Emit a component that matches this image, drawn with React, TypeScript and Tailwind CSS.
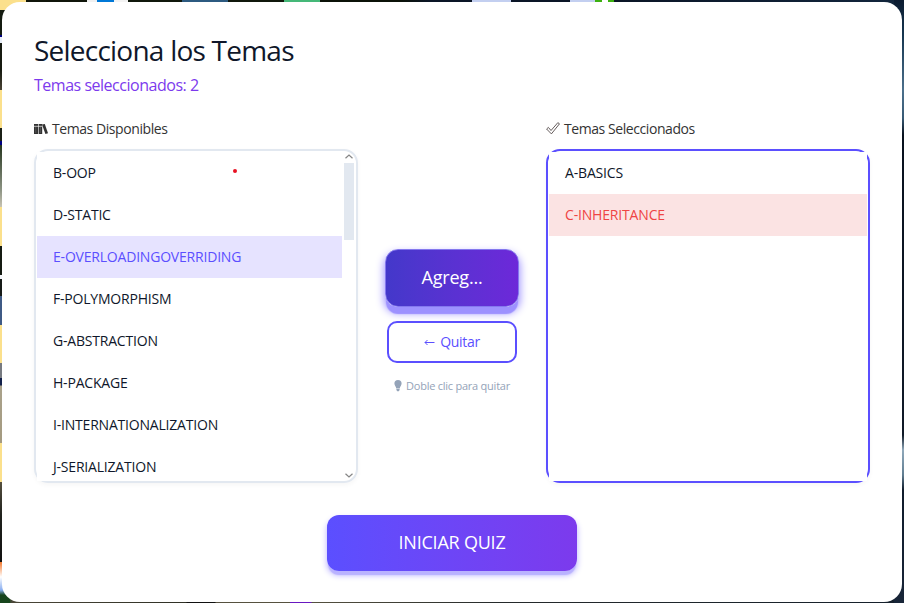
import React from "react";

const available = [
  "B-OOP",
  "D-STATIC",
  "E-OVERLOADINGOVERRIDING",
  "F-POLYMORPHISM",
  "G-ABSTRACTION",
  "H-PACKAGE",
  "I-INTERNATIONALIZATION",
  "J-SERIALIZATION",
];
const chosen = ["A-BASICS", "C-INHERITANCE"];

function Books() {
  return (
    <svg width="14" height="10" viewBox="0 0 14 10" className="shrink-0">
      <path d="M0 0h4v10H0zM4.6 0h3.6v10H4.6z" fill="#333" />
      <path d="M8 .6 10.8 0 14 9.2 11.4 10z" fill="#333" />
      <path d="M0 2.3h8.2" stroke="#fff" strokeWidth=".7" />
      <path d="M1.8 3v6M6.4 3v6" stroke="#777" strokeWidth=".5" />
    </svg>
  );
}

function Check() {
  return (
    <svg width="14" height="13" viewBox="0 0 14 13" className="shrink-0">
      <path d="M.6 7 2.4 5.4 5 8.5 11.8.7 13.5 1.8 5.4 11.9z" fill="#fff" stroke="#4a4040" strokeWidth=".85" />
    </svg>
  );
}

function Bulb() {
  return (
    <svg width="8" height="12" viewBox="0 0 8 12" className="shrink-0">
      <path d="M4 0a3.6 3.6 0 0 1 3.6 3.6C7.6 5.6 6 6.4 5.8 8.4H2.2C2 6.4.4 5.6.4 3.6A3.6 3.6 0 0 1 4 0zM2.4 9h3.2v1L4.8 11.3H3.2L2.4 10z" fill="#94a3b8" />
    </svg>
  );
}

function Arrow() {
  return (
    <svg width="11" height="7" viewBox="0 0 11 7" className="mt-0.5 shrink-0">
      <path d="M10.5 3.5H1M3.5 1 1 3.5 3.5 6" fill="none" stroke="currentColor" />
    </svg>
  );
}

function Chevron({ down = false }: { down?: boolean }) {
  return (
    <svg width="8" height="5" viewBox="0 0 8 5" className={down ? "rotate-180" : ""}>
      <path d="M.5 4.3 4 1l3.5 3.3" fill="none" stroke="#858585" strokeWidth="1.2" />
    </svg>
  );
}

export default function App() {
  return (
    <div className="flex h-[603px] w-[904px] overflow-hidden bg-[linear-gradient(90deg,#fbe08c_26px,#10150a_26px_87px,#f0f0f0_87px_97px,#0078d7_97px_114px,#f3f3f3_114px_128px,#10180c_128px_182px,#2c5a80_182px_228px,#10180c_228px_284px,#45b878_284px_320px,#0b1208_320px_400px,#0a1526_430px_472px,#c3cff0_472px_511px,#0a1526_511px_570px,#c3cff0_570px_595px,#3cb010_595px_602px,#fff_602px_608px,#3cb010_608px_614px,#0a1526_614px,#12263d)] bg-size-[904px_10px] bg-no-repeat">
      <div className="h-full w-full bg-[linear-gradient(180deg,transparent_10px,#141b10_10px_35px,#000080_35px_37px,#e8eef8_37px_43px,#161a10_43px_70px,#4a4435_90px,#fbe08c_90px_128px,#1b2016_128px_141px,#000080_141px_145px,#26361f_145px,#8d9484_190px,#c8c4b4_207px,#fbe08c_207px_246px,#151b12_246px_275px,#f4f6fb_275px_279px,#161b18_279px_296px,#3f5a85_296px_325px,#fbe08c_325px_363px,#777a80_363px_378px,#12204a_378px_385px,#aaa28b_386px,#a49a80_443px,#fbe08c_443px_482px,#56503f_482px,#20221d_515px,#111_562px,#f47a30_562px,#fff_577px,#89aef0_590px,#17451d_595px),linear-gradient(180deg,#0b1b30,#163650_35px,#4c708c_90px,#385a75_118px,#08111e_135px,#101a28_435px,#90a9bb_450px,#607d91_475px,#101c2c_490px,#182538),linear-gradient(90deg,#164b20_8px,#4a4638_12px,#303126_186px,#111_187px_215px,#56513f_216px_290px,#6818c0_290px_311px,#55513f_312px,#252a2b_500px,#15202c)] bg-size-[10px_603px,10px_603px,904px_10px] bg-position-[left_top,right_top,left_bottom] bg-no-repeat p-0.5 pb-px font-['Open_Sans','Noto_Sans',sans-serif]">
        <main className="flex h-[600px] w-[900px] flex-col rounded-[18px] bg-white px-8 pt-8">
          <h1 className="h-9 whitespace-nowrap text-[28px] leading-8 tracking-[-0.77px] text-[#0f172a]">Selecciona los Temas</h1>
          <p className="h-[31px] whitespace-nowrap text-[16px] leading-[31px] tracking-[-0.48px] text-[#7c3aed]">Temas seleccionados: 2</p>

          <div className="mt-3.5 flex">
            <section className="w-[324px]">
              <h2 className="flex h-7 items-center gap-1 whitespace-nowrap pb-0.5 text-[14px] tracking-[-0.43px] text-[#333]"><span className="pt-px"><Books /></span>Temas Disponibles</h2>
              <div className="mt-1.5 h-[334px] rounded-[14px] border-2 border-[#e2e8f0] pt-px shadow-[0_2px_5px_rgba(0,0,0,0.04)]">
                <div className="flex h-full">
                  <ul className="relative ml-px w-[305px] overflow-hidden bg-white text-[14px] tracking-[-0.2px] text-[#0f172a]">
                    {available.map((t, i) => (
                      <li key={t} className={i === 2 ? "flex h-[42px] items-center bg-[#e6e3ff] pb-0.5 pl-4 text-[#5b4fff]" : "flex h-[42px] items-center pb-0.5 pl-4"}>{t}</li>
                    ))}
                    <span className="absolute left-[196px] top-[17px] size-1 rounded-full bg-[#e81123]" />
                  </ul>
                  <div className="ml-0.5 flex w-2.5 flex-col items-center pt-0.5">
                    <Chevron />
                    <div className="mt-1 h-[77px] w-2.5 bg-[#e2e8f0]" />
                    <div className="mt-auto flex pb-[3px]"><Chevron down /></div>
                  </div>
                </div>
              </div>
            </section>

            <section className="flex w-[188px] flex-col items-center pt-[134px]">
              <button className="h-[58px] w-[134px] rounded-[13px] border border-[#8478ee] bg-linear-to-r from-[#4338ca] to-[#6d28d9] bg-origin-border pb-0.5 text-[18px] tracking-[-0.2px] text-white shadow-[0_8px_1px_-1px_#9d91ff,0_5px_9px_1px_#9d91ff]">Agreg...</button>
              <button className="mt-3.5 flex h-[42px] w-[130px] items-center justify-center gap-[5px] rounded-[10px] border-2 border-[#5b4fff] bg-white pb-0.5 text-[14px] tracking-[-0.3px] text-[#5b4fff]"><Arrow />Quitar</button>
              <p className="mt-[13px] flex items-center gap-1 whitespace-nowrap text-[11px] leading-5 tracking-[-0.24px] text-[#94a3b8]"><Bulb />Doble clic para quitar</p>
            </section>

            <section className="w-[324px]">
              <h2 className="flex h-7 items-center gap-1 whitespace-nowrap pb-0.5 text-[14px] tracking-[-0.43px] text-[#333]"><Check />Temas Seleccionados</h2>
              <div className="mt-1.5 h-[334px] rounded-[14px] border-2 border-[#5b4fff] pt-px shadow-[0_2px_5px_rgba(0,0,0,0.04)]">
                <ul className="mx-px h-full bg-white text-[14px] tracking-[-0.17px] text-[#0f172a]">
                  {chosen.map((t, i) => (
                    <li key={t} className={i === 1 ? "flex h-[42px] items-center bg-[#fbe3e3] pb-0.5 pl-4 text-[#ef4444]" : "flex h-[42px] items-center pb-0.5 pl-4"}>{t}</li>
                  ))}
                </ul>
              </div>
            </section>
          </div>

          <button className="mx-auto mt-8 h-14 w-[250px] shrink-0 rounded-xl bg-linear-to-r from-[#5b4fff] to-[#7c3aed] pb-0.5 text-[18px] tracking-[-0.22px] text-white shadow-[0_5px_1px_-1px_#b9b2ff,0_4px_6px_#b5adff]">INICIAR QUIZ</button>
        </main>
      </div>
    </div>
  );
}
